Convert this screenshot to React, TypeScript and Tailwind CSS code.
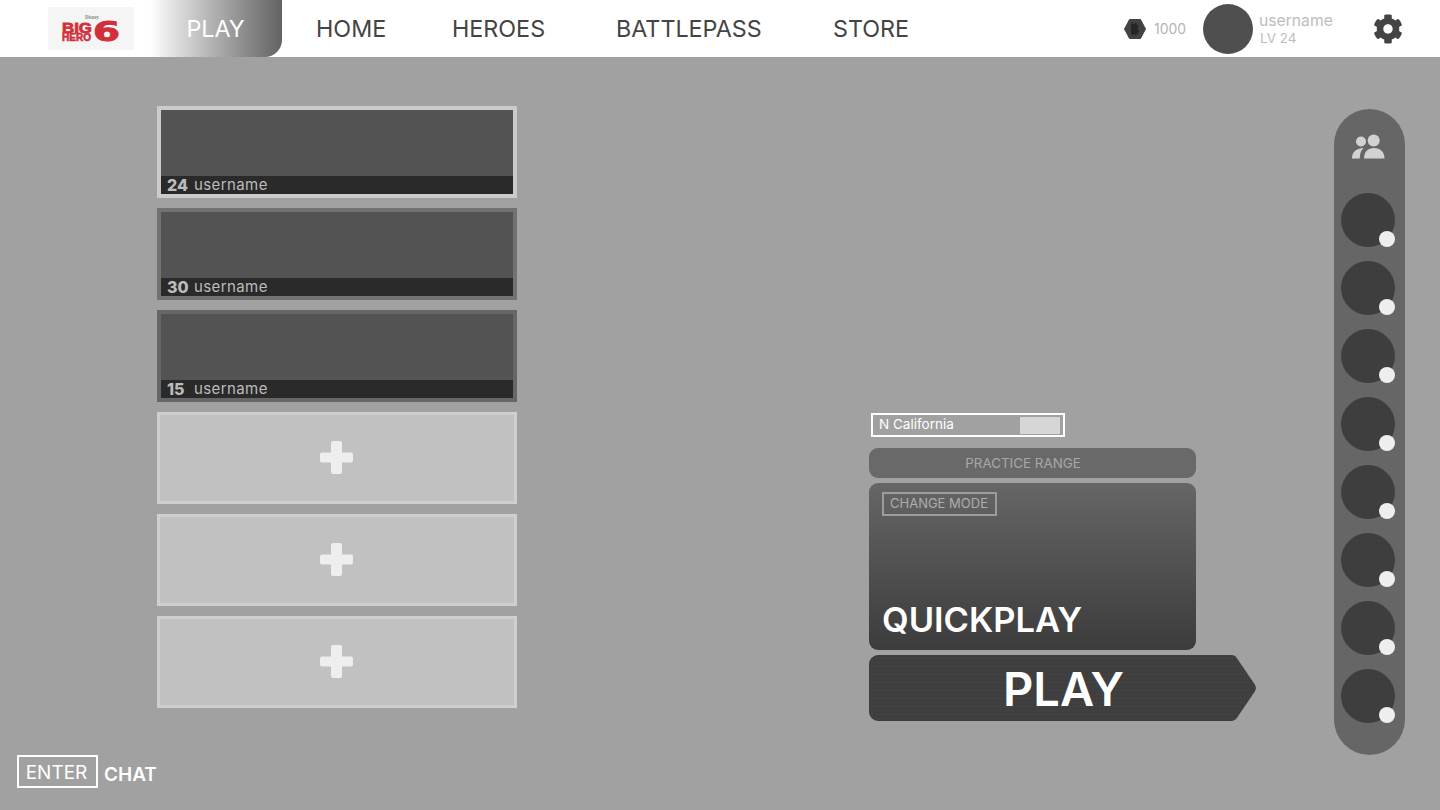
import { FaCog } from "react-icons/fa";

const font = "font-['Inter',sans-serif]";

function Logo() {
  return (
    <div className="ml-[48px] mt-[7px] flex h-[43px] w-[86px] shrink-0 items-center justify-center bg-[#f5f5f5]">
      <svg width="86" height="43" viewBox="0 0 86 43">
        <text x="37" y="12" fontSize="5.500" fontWeight="700" fill="#8a8a8a" fontFamily="Liberation Serif, serif" textLength="14" lengthAdjust="spacingAndGlyphs">Disney</text>
        <text x="14" y="25.500" fontSize="14.500" fontWeight="900" fill="#d32f3a" stroke="#d32f3a" strokeWidth="0.8" fontFamily="Liberation Sans, sans-serif" textLength="30" lengthAdjust="spacingAndGlyphs">BIG</text>
        <text x="14" y="34" fontSize="10" fontWeight="900" fill="#d32f3a" stroke="#d32f3a" strokeWidth="0.6" fontFamily="Liberation Sans, sans-serif" textLength="29" lengthAdjust="spacingAndGlyphs">HERO</text>
        <text x="45" y="34" fontSize="27" fontWeight="900" fill="#d32f3a" stroke="#d32f3a" strokeWidth="1" fontFamily="DejaVu Sans, sans-serif" textLength="27" lengthAdjust="spacingAndGlyphs">6</text>
      </svg>
    </div>
  );
}

function Coin() {
  return (
    <svg width="22" height="20" viewBox="0 0 22 20">
      <polygon points="5.500,0.500 16.500,0.500 21.500,10 16.500,19.500 5.500,19.500 0.500,10" fill="#424242" stroke="#424242" strokeLinejoin="round" />
      <path d="M8 3.500h1.500v1.500h1.500V3.500h1.500v1.700a2.600 2.600 0 0 1 1 4.500A2.800 2.800 0 0 1 12.500 15v1.500H11V15H9.500v1.500H8V15H7V5h1z" fill="#262626" />
    </svg>
  );
}

function PeopleIcon() {
  return (
    <svg width="33" height="25" viewBox="0 0 33 25" className="text-[#d2d2d2]">
      <circle cx="9" cy="7.500" r="5" fill="currentColor" />
      <circle cx="21.700" cy="6.500" r="6" fill="currentColor" />
      <path d="M0 24.500C0 18 4 14.500 11.500 14C8.500 17 8 20 7.800 24.500Z" fill="currentColor" />
      <path d="M12 24.500C12 18 16 14 22 14C28 14 32.500 18 32.500 24.500Z" fill="currentColor" />
    </svg>
  );
}

function PlusIcon() {
  return (
    <svg width="33" height="33" viewBox="0 0 33 33" className="text-[#eeeeee]">
      <path d="M13 0h7a2 2 0 0 1 2 2v9.500h9a2 2 0 0 1 2 2v6a2 2 0 0 1-2 2h-9V31a2 2 0 0 1-2 2h-7a2 2 0 0 1-2-2v-9.500H2a2 2 0 0 1-2-2v-6a2 2 0 0 1 2-2h9V2a2 2 0 0 1 2-2Z" fill="currentColor" />
    </svg>
  );
}

function Header() {
  return (
    <header className="flex h-[57px] w-full items-start bg-white">
      <Logo />
      <div className="ml-[16px] flex h-[57px] w-[132px] shrink-0 items-center justify-center rounded-br-[17px] bg-gradient-to-r from-[#ffffff] to-[#636363] pt-[1px] pr-[1px] text-[23.300px] text-white">
        PLAY
      </div>
      <nav className="flex h-[57px] items-center pt-[1px] pl-[34px] text-[23.300px] text-[#444444]">
        <span className="w-[136px]">HOME</span>
        <span className="w-[164px]">HEROES</span>
        <span className="w-[217px]">BATTLEPASS</span>
        <span>STORE</span>
      </nav>
      <div className="ml-auto flex h-[57px] items-center">
        <Coin />
        <span className="ml-[8px] w-[32px] text-[14px] text-[#b5b5b5]">1000</span>
        <div className="ml-[17px] h-[50px] w-[50px] rounded-full bg-[#4f4f4f]" />
        <div className="ml-[6px] flex w-[107px] flex-col text-[#bdbdbd]">
          <span className="text-[15.700px] leading-[18px]">username</span>
          <span className="pl-[1px] text-[13.500px] leading-[16px]">LV 24</span>
        </div>
        <FaCog className="mr-[37px] ml-[7px] h-[30px] w-[30px] text-[#444444]" />
      </div>
    </header>
  );
}

function PlayerCard({ level, name, border }: { level: number; name: string; border: string }) {
  return (
    <div className={`flex h-[92px] w-[360px] flex-col justify-end border-4 bg-[#535353] ${border}`}>
      <div className="flex h-[18px] items-center bg-[#2a2a2a] pl-[6px] text-[#bcbcbc]">
        <b className="w-[27px] text-[16px] font-extrabold">{level}</b>
        <span className="text-[15px] tracking-[0.4px]">{name}</span>
      </div>
    </div>
  );
}

function EmptySlot() {
  return (
    <div className="flex h-[92px] w-[360px] items-center justify-center border-[3px] border-[#cfcfcf] bg-[#c1c1c1] pr-[2px] pb-[2px]">
      <PlusIcon />
    </div>
  );
}

function Friend() {
  return (
    <div className="relative h-[54px] w-[54px] rounded-full bg-[#3e3e3e]">
      <span className="absolute right-0 bottom-0 h-[16px] w-[16px] rounded-full bg-[#eeeeee]" />
    </div>
  );
}

export default function App() {
  return (
    <div className={`flex h-[810px] w-[1440px] flex-col overflow-hidden bg-[#a1a1a1] ${font}`}>
      <Header />
      <main className="flex flex-1">
        <section className="flex w-[869px] shrink-0 flex-col pl-[17px]">
          <div className="mt-[49px] ml-[140px] flex flex-col gap-[10px]">
            <PlayerCard level={24} name="username" border="border-[#cbcbcb]" />
            <PlayerCard level={30} name="username" border="border-[#727272]" />
            <PlayerCard level={15} name="username" border="border-[#676767]" />
            <EmptySlot />
            <EmptySlot />
            <EmptySlot />
          </div>
          <div className="mt-[47px] flex items-start">
            <div className="flex h-[33px] w-[81px] items-center justify-center border-2 border-white pt-[3px] pr-[2px] text-[19px] text-white">
              ENTER
            </div>
            <span className="mt-[7px] ml-[6px] text-[19px] leading-[26px] font-semibold text-white">CHAT</span>
          </div>
        </section>

        <section className="flex w-[387px] shrink-0 flex-col pt-[356px]">
          <div className="ml-[2px] flex h-[24px] w-[194px] items-center justify-between border-2 border-white pr-[3px] pl-[6px] text-[13.500px] text-white">
            <span className="mb-[1px]">N California</span>
            <span className="h-[17px] w-[40px] bg-[#d6d6d6]" />
          </div>
          <div className="mt-[11px] flex h-[30px] w-[327px] items-center justify-center rounded-[9px] bg-[#696969] pt-[1px] pr-[19px] text-[13.400px] text-[#a8a8a8]">
            PRACTICE RANGE
          </div>
          <div className="mt-[5px] flex h-[167px] w-[327px] flex-col justify-between rounded-[9px] bg-gradient-to-b from-[#666666] to-[#3c3c3c] pt-[9px] pb-[8px] pl-[13px]">
            <div className="flex h-[24px] w-[115px] items-center justify-center border-2 border-[#9c9c9c] pr-[1px] text-[13px] text-[#adadad]">
              CHANGE MODE
            </div>
            <div className="text-[34.500px] leading-[44px] font-semibold text-white">QUICKPLAY</div>
          </div>
          <div className="relative mt-[5px] flex h-[66px] w-[387px] items-center justify-center pl-[2px]">
            <svg className="absolute inset-0" width="387" height="66" viewBox="0 0 387 66">
              <defs>
                <pattern id="playDots" width="4" height="4" patternUnits="userSpaceOnUse">
                  <rect width="4" height="4" fill="#404040" />
                  <rect x="1" y="1" width="1" height="1" fill="#333333" />
                </pattern>
              </defs>
              <path d="M9 0H362a7 7 0 0 1 6 3.200L385.500 29a7 7 0 0 1 0 8L368 62.800a7 7 0 0 1-6 3.200H9a9 9 0 0 1-9-9V9a9 9 0 0 1 9-9Z" fill="url(#playDots)" />
            </svg>
            <span className="relative mt-[1px] text-[47px] leading-none font-semibold text-white">PLAY</span>
          </div>
        </section>

        <aside className="mt-[52px] ml-[78px] flex h-[646px] w-[71px] shrink-0 flex-col items-center rounded-[36px] bg-[#666666] pt-[25px]">
          <div className="pr-[3px]">
            <PeopleIcon />
          </div>
          <div className="mt-[34px] mr-[3px] flex flex-col gap-[14px]">
            {[0, 1, 2, 3, 4, 5, 6, 7].map((i) => (
              <Friend key={i} />
            ))}
          </div>
        </aside>
      </main>
    </div>
  );
}
